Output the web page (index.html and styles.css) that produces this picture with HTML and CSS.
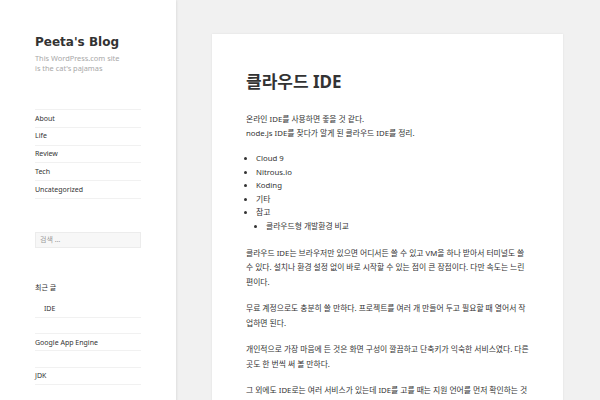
FILE: index.html
```html
<!DOCTYPE html>
<html lang="ko">
<head>
<meta charset="utf-8">
<title>Peeta's Blog</title>
<link rel="stylesheet" href="styles.css">
</head>
<body>
<div class="page">
  <aside class="sidebar">
    <h1 class="site-title">Peeta's Blog</h1>
    <p class="site-desc">This WordPress.com site<br>is the cat's pajamas</p>
    <ul class="nav">
      <li>About</li>
      <li>Life</li>
      <li>Review</li>
      <li>Tech</li>
      <li>Uncategorized</li>
    </ul>
    <div class="search">검색 …</div>
    <h2 class="widget-title">최근 글</h2>
    <ul class="widget-list">
      <li class="child">IDE</li>
      <li>Google App Engine</li>
      <li>JDK</li>
    </ul>
  </aside>
  <main class="main">
    <article class="card">
      <h1 class="post-title">클라우드 IDE</h1>
      <p>온라인 IDE를 사용하면 좋을 것 같다.<br>node.js IDE를 찾다가 알게 된 클라우드 IDE를 정리.</p>
      <ul class="bullets">
        <li>Cloud 9</li>
        <li>Nitrous.io</li>
        <li>Koding</li>
        <li>기타</li>
        <li>참고
          <ul>
            <li>클라우드형 개발환경 비교</li>
          </ul>
        </li>
      </ul>
      <p>클라우드 IDE는 브라우저만 있으면 어디서든 쓸 수 있고 VM을 하나 받아서 터미널도 쓸 수 있다. 설치나 환경 설정 없이 바로 시작할 수 있는 점이 큰 장점이다. 다만 속도는 느린 편이다.</p>
      <p>무료 계정으로도 충분히 쓸 만하다. 프로젝트를 여러 개 만들어 두고 필요할 때 열어서 작업하면 된다.</p>
      <p>개인적으로 가장 마음에 든 것은 화면 구성이 깔끔하고 단축키가 익숙한 서비스였다. 다른 곳도 한 번씩 써 볼 만하다.</p>
      <p>그 외에도 IDE로는 여러 서비스가 있는데 IDE를 고를 때는 지원 언어를 먼저 확인하는 것이 좋다. VM 성능이나 저장 공간도 서비스마다 다르다.</p>
    </article>
  </main>
</div>
</body>
</html>
```
FILE: styles.css
```css
html {
  overflow: hidden;
}
body {
  margin: 0;
  background: #f1f1f1;
  font-family: "Noto Sans", "Noto Sans CJK KR", sans-serif;
  color: #333;
}
.page {
  display: flex;
  align-items: flex-start;
}
.sidebar {
  width: 106px;
  min-height: 400px;
  padding: 34px 35px 0;
  background: #fff;
  box-shadow: 0 0 3px rgba(0, 0, 0, 0.14);
  flex-shrink: 0;
}
.site-title {
  margin: 0;
  font-family: "DejaVu Sans", "Noto Sans CJK KR", sans-serif;
  font-size: 12px;
  line-height: 16px;
  font-weight: bold;
  color: #333;
}
.site-desc {
  margin: 4px 0 0;
  font-size: 7.4px;
  line-height: 9.5px;
  color: #a8a8a8;
}
.nav {
  list-style: none;
  margin: 36px 0 0;
  padding: 0;
  border-top: 1px solid #f1f1f1;
}
.nav li {
  font-size: 7px;
  line-height: 9.8px;
  padding: 3.5px 0 3.5px;
  border-bottom: 1px solid #f1f1f1;
  color: #333;
}
.search {
  margin-top: 33px;
  height: 14px;
  padding: 0 4px;
  border: 1px solid #ececec;
  background: #f7f7f7;
  font-size: 7px;
  line-height: 14px;
  color: #999;
}
.widget-title {
  margin: 35px 0 0;
  font-size: 7px;
  line-height: 10px;
  font-weight: normal;
  color: #333;
}
.widget-list {
  list-style: none;
  margin: 8px 0 0;
  padding: 0;
}
.widget-list li {
  font-size: 7px;
  line-height: 9px;
  padding: 3.5px 0;
  border-top: 1px solid #f1f1f1;
  border-bottom: 1px solid #f1f1f1;
  margin-bottom: 15.5px;
  color: #333;
}
.widget-list li.child {
  border-top: 0;
  padding-left: 9px;
}
.main {
  flex: 1;
  padding: 34px 37px 0 36px;
}
.card {
  background: #fff;
  padding: 37px 34px 20px;
  box-shadow: 0 0 2px rgba(0, 0, 0, 0.08);
  min-height: 400px;
}
.post-title {
  margin: 0 0 19px;
  font-size: 17px;
  line-height: 22px;
  font-weight: bold;
  color: #333;
}
.card p {
  margin: 0 0 12px;
  font-size: 7.8px;
  line-height: 14.5px;
}
.card p:first-of-type {
  line-height: 14px;
}
.bullets {
  margin: 0 0 12px;
  padding-left: 10px;
  list-style: disc outside;
  font-size: 7.8px;
  line-height: 13.6px;
}
.bullets ul {
  margin: 0;
  padding-left: 10px;
  list-style: disc outside;
}
```
